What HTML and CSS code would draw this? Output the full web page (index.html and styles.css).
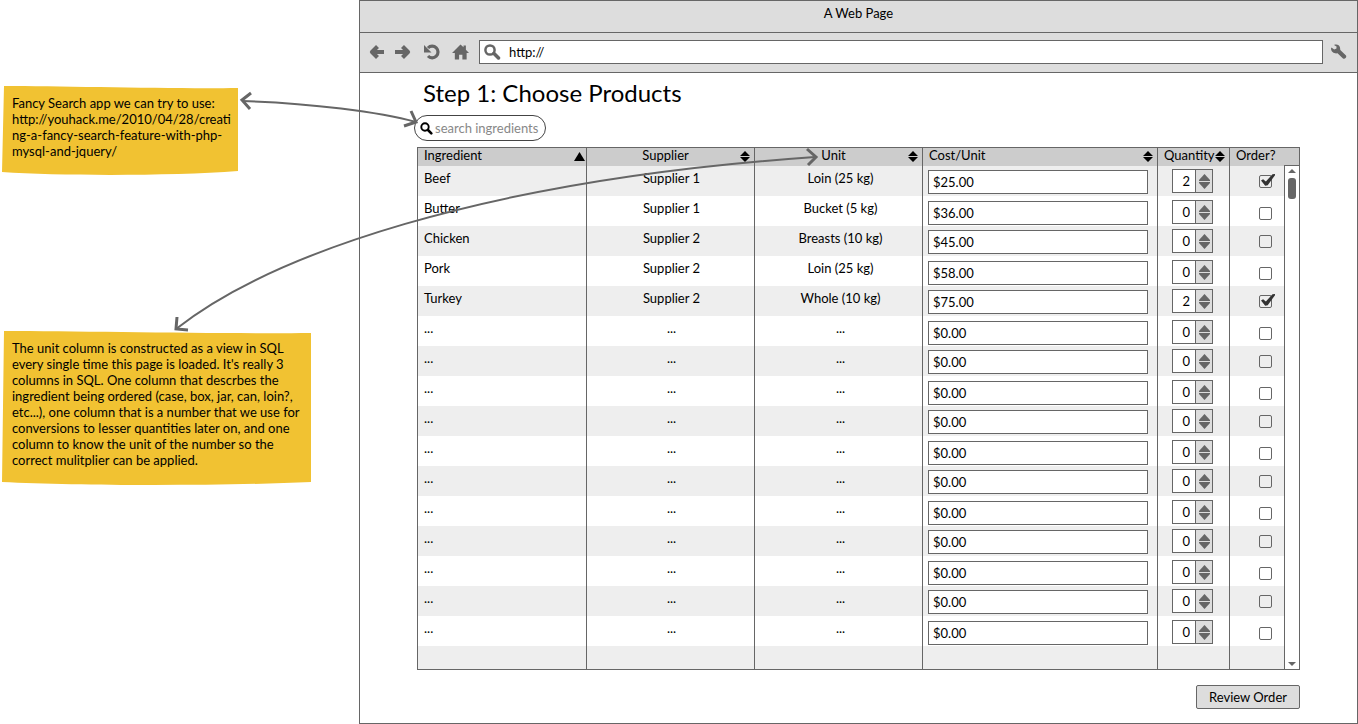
FILE: index.html
```html
<!DOCTYPE html>
<html lang="en">
<head>
<meta charset="utf-8">
<title>A Web Page</title>
<link rel="stylesheet" href="styles.css">
</head>
<body>
<svg class="defs" aria-hidden="true">
  <symbol id="sort" viewBox="0 0 10 11"><path d="M5 0 10 5H0ZM0 6H10L5 11Z"/></symbol>
  <symbol id="up" viewBox="0 0 11 7"><path d="M5.500 0 11 6V7H0V6Z"/></symbol>
  <symbol id="down" viewBox="0 0 11 7"><path d="M0 0H11V1L5.500 7 0 1Z"/></symbol>
</svg>
<div class="page">
  <aside class="notes">
    <div class="note note-search">
      <svg class="paper" viewBox="0 0 237 89" preserveAspectRatio="none" aria-hidden="true"><path d="M2 0 C60 0 170 3 236 2 L236 85 C170 90 60 90 0 86Z"/></svg>
      <p>Fancy Search app we can try to use:<br>http://youhack.me/2010/04/28/creati<br>ng-a-fancy-search-feature-with-php-<br>mysql-and-jquery/</p>
    </div>
    <div class="note note-unit">
      <svg class="paper" viewBox="0 0 310 154" preserveAspectRatio="none" aria-hidden="true"><path d="M2 0 C80 0 220 3 309 2 L309 151 C220 155 80 155 0 151Z"/></svg>
      <p>The unit column is constructed as a view in SQL<br>every single time this page is loaded. It's really 3<br>columns in SQL. One column that descrbes the<br>ingredient being ordered (case, box, jar, can, loin?,<br>etc...), one column that is a number that we use for<br>conversions to lesser quantities later on, and one<br>column to know the unit of the number so the<br>correct mulitplier can be applied.</p>
    </div>
  </aside>
  <main class="browser">
    <header class="titlebar">A Web Page</header>
    <nav class="toolbar">
      <button class="tool" aria-label="Back"><svg width="17" height="16" viewBox="0 0 17 16"><path d="M8.500 2.500 3 8l5.500 5.500M3 8h12" fill="none" stroke="#666" stroke-width="4.200" stroke-linejoin="round"/></svg></button>
      <button class="tool" aria-label="Forward"><svg width="17" height="16" viewBox="0 0 17 16"><path d="M8.500 2.500 14 8l-5.500 5.500M14 8H1" fill="none" stroke="#666" stroke-width="4.200" stroke-linejoin="round"/></svg></button>
      <button class="tool tool-reload" aria-label="Reload"><svg width="17" height="16" viewBox="0 0 17 16"><path d="M4 4A5.800 5.800 0 1 1 4 12" fill="none" stroke="#666" stroke-width="3.200"/><path d="M0 1v7.500h7.500Z" fill="#666"/></svg></button>
      <button class="tool" aria-label="Home"><svg width="17" height="16" viewBox="0 0 18 16"><path d="M9 0 12.200 3V1h2.500v4.500L18 9H15.500v7H11v-5H7.500v5H3V9H0Z" fill="#666"/></svg></button>
      <div class="address">
        <svg width="17" height="16" viewBox="0 0 17 16" aria-hidden="true"><circle cx="6" cy="6" r="4.600" fill="none" stroke="#666" stroke-width="2.500"/><path d="M10 9.500 14.500 14" stroke="#666" stroke-width="3.500" stroke-linecap="round"/></svg>
        <input type="text" aria-label="Address" value="http://">
      </div>
      <button class="tool" aria-label="Settings"><svg width="16" height="16" viewBox="0 0 16 16"><path d="M3 1C5.500-.2 8.500.8 9 3.500L9.300 6 15 11.500C16 13.500 14 15.500 12 14.500L6.500 9.300C3.500 10 0 8 0 4.500L.5 3.500 3.200 5.500 5.500 4.500V2.500Z" fill="#666"/></svg></button>
    </nav>
    <section class="content">
      <h1>Step 1: Choose Products</h1>
      <label class="search">
        <svg width="13" height="13" viewBox="0 0 13 13" aria-hidden="true"><circle cx="5" cy="5" r="3.700" fill="none" stroke="#000" stroke-width="1.900"/><path d="M8 8 11.300 11.300" stroke="#000" stroke-width="2.600" stroke-linecap="round"/></svg>
        <input type="search" aria-label="search ingredients" placeholder="search ingredients">
      </label>
      <div class="grid">
        <table>
          <colgroup><col class="c-third"><col class="c-third"><col class="c-third"><col><col class="c-qty"><col class="c-order"></colgroup>
          <thead>
            <tr>
              <th class="left">Ingredient<svg class="sort sort-asc" width="11" height="9" viewBox="0 0 11 9"><path d="M5.500 0 11 9H0Z"/></svg></th>
              <th>Supplier<svg class="sort" width="10" height="11"><use href="#sort"/></svg></th>
              <th>Unit<svg class="sort" width="10" height="11"><use href="#sort"/></svg></th>
              <th class="left">Cost/Unit<svg class="sort" width="10" height="11"><use href="#sort"/></svg></th>
              <th class="left">Quantity<svg class="sort" width="10" height="11"><use href="#sort"/></svg></th>
              <th class="left">Order?</th>
            </tr>
          </thead>
          <tbody>
            <tr><td>Beef</td><td>Supplier 1</td><td>Loin (25 kg)</td><td><input class="cost" aria-label="Cost" value="$25.00"></td><td><span class="stepper"><input type="number" aria-label="Quantity" value="2"><span class="arrows"><button aria-label="More"><svg><use href="#up"/></svg></button><button aria-label="Less"><svg><use href="#down"/></svg></button></span></span></td><td><input type="checkbox" aria-label="Order" checked></td></tr>
            <tr><td>Butter</td><td>Supplier 1</td><td>Bucket (5 kg)</td><td><input class="cost" aria-label="Cost" value="$36.00"></td><td><span class="stepper"><input type="number" aria-label="Quantity" value="0"><span class="arrows"><button aria-label="More"><svg><use href="#up"/></svg></button><button aria-label="Less"><svg><use href="#down"/></svg></button></span></span></td><td><input type="checkbox" aria-label="Order"></td></tr>
            <tr><td>Chicken</td><td>Supplier 2</td><td>Breasts (10 kg)</td><td><input class="cost" aria-label="Cost" value="$45.00"></td><td><span class="stepper"><input type="number" aria-label="Quantity" value="0"><span class="arrows"><button aria-label="More"><svg><use href="#up"/></svg></button><button aria-label="Less"><svg><use href="#down"/></svg></button></span></span></td><td><input type="checkbox" aria-label="Order"></td></tr>
            <tr><td>Pork</td><td>Supplier 2</td><td>Loin (25 kg)</td><td><input class="cost" aria-label="Cost" value="$58.00"></td><td><span class="stepper"><input type="number" aria-label="Quantity" value="0"><span class="arrows"><button aria-label="More"><svg><use href="#up"/></svg></button><button aria-label="Less"><svg><use href="#down"/></svg></button></span></span></td><td><input type="checkbox" aria-label="Order"></td></tr>
            <tr><td>Turkey</td><td>Supplier 2</td><td>Whole (10 kg)</td><td><input class="cost" aria-label="Cost" value="$75.00"></td><td><span class="stepper"><input type="number" aria-label="Quantity" value="2"><span class="arrows"><button aria-label="More"><svg><use href="#up"/></svg></button><button aria-label="Less"><svg><use href="#down"/></svg></button></span></span></td><td><input type="checkbox" aria-label="Order" checked></td></tr>
            <tr><td>...</td><td>...</td><td>...</td><td><input class="cost" aria-label="Cost" value="$0.00"></td><td><span class="stepper"><input type="number" aria-label="Quantity" value="0"><span class="arrows"><button aria-label="More"><svg><use href="#up"/></svg></button><button aria-label="Less"><svg><use href="#down"/></svg></button></span></span></td><td><input type="checkbox" aria-label="Order"></td></tr>
            <tr><td>...</td><td>...</td><td>...</td><td><input class="cost" aria-label="Cost" value="$0.00"></td><td><span class="stepper"><input type="number" aria-label="Quantity" value="0"><span class="arrows"><button aria-label="More"><svg><use href="#up"/></svg></button><button aria-label="Less"><svg><use href="#down"/></svg></button></span></span></td><td><input type="checkbox" aria-label="Order"></td></tr>
            <tr><td>...</td><td>...</td><td>...</td><td><input class="cost" aria-label="Cost" value="$0.00"></td><td><span class="stepper"><input type="number" aria-label="Quantity" value="0"><span class="arrows"><button aria-label="More"><svg><use href="#up"/></svg></button><button aria-label="Less"><svg><use href="#down"/></svg></button></span></span></td><td><input type="checkbox" aria-label="Order"></td></tr>
            <tr><td>...</td><td>...</td><td>...</td><td><input class="cost" aria-label="Cost" value="$0.00"></td><td><span class="stepper"><input type="number" aria-label="Quantity" value="0"><span class="arrows"><button aria-label="More"><svg><use href="#up"/></svg></button><button aria-label="Less"><svg><use href="#down"/></svg></button></span></span></td><td><input type="checkbox" aria-label="Order"></td></tr>
            <tr><td>...</td><td>...</td><td>...</td><td><input class="cost" aria-label="Cost" value="$0.00"></td><td><span class="stepper"><input type="number" aria-label="Quantity" value="0"><span class="arrows"><button aria-label="More"><svg><use href="#up"/></svg></button><button aria-label="Less"><svg><use href="#down"/></svg></button></span></span></td><td><input type="checkbox" aria-label="Order"></td></tr>
            <tr><td>...</td><td>...</td><td>...</td><td><input class="cost" aria-label="Cost" value="$0.00"></td><td><span class="stepper"><input type="number" aria-label="Quantity" value="0"><span class="arrows"><button aria-label="More"><svg><use href="#up"/></svg></button><button aria-label="Less"><svg><use href="#down"/></svg></button></span></span></td><td><input type="checkbox" aria-label="Order"></td></tr>
            <tr><td>...</td><td>...</td><td>...</td><td><input class="cost" aria-label="Cost" value="$0.00"></td><td><span class="stepper"><input type="number" aria-label="Quantity" value="0"><span class="arrows"><button aria-label="More"><svg><use href="#up"/></svg></button><button aria-label="Less"><svg><use href="#down"/></svg></button></span></span></td><td><input type="checkbox" aria-label="Order"></td></tr>
            <tr><td>...</td><td>...</td><td>...</td><td><input class="cost" aria-label="Cost" value="$0.00"></td><td><span class="stepper"><input type="number" aria-label="Quantity" value="0"><span class="arrows"><button aria-label="More"><svg><use href="#up"/></svg></button><button aria-label="Less"><svg><use href="#down"/></svg></button></span></span></td><td><input type="checkbox" aria-label="Order"></td></tr>
            <tr><td>...</td><td>...</td><td>...</td><td><input class="cost" aria-label="Cost" value="$0.00"></td><td><span class="stepper"><input type="number" aria-label="Quantity" value="0"><span class="arrows"><button aria-label="More"><svg><use href="#up"/></svg></button><button aria-label="Less"><svg><use href="#down"/></svg></button></span></span></td><td><input type="checkbox" aria-label="Order"></td></tr>
            <tr><td>...</td><td>...</td><td>...</td><td><input class="cost" aria-label="Cost" value="$0.00"></td><td><span class="stepper"><input type="number" aria-label="Quantity" value="0"><span class="arrows"><button aria-label="More"><svg><use href="#up"/></svg></button><button aria-label="Less"><svg><use href="#down"/></svg></button></span></span></td><td><input type="checkbox" aria-label="Order"></td></tr>
            <tr><td>...</td><td>...</td><td>...</td><td><input class="cost" aria-label="Cost" value="$0.00"></td><td><span class="stepper"><input type="number" aria-label="Quantity" value="0"><span class="arrows"><button aria-label="More"><svg><use href="#up"/></svg></button><button aria-label="Less"><svg><use href="#down"/></svg></button></span></span></td><td><input type="checkbox" aria-label="Order"></td></tr>
            <tr class="rest"><td></td><td></td><td></td><td></td><td></td><td></td></tr>
          </tbody>
        </table>
        <div class="scrollbar">
          <svg width="8" height="4" viewBox="0 0 8 4"><path d="M4 0 8 4H0Z"/></svg>
          <span class="thumb"></span>
          <svg class="end" width="8" height="4" viewBox="0 0 8 4"><path d="M0 0H8L4 4Z"/></svg>
        </div>
      </div>
      <button class="review">Review Order</button>
    </section>
  </main>
  <svg class="links" width="830" height="340" viewBox="0 0 830 340" aria-hidden="true">
    <path d="M242 101C310 103 380 112 416 122M176 329C270 255 480 180 815 157"/>
    <path class="head" d="M251 93 242 100 250 109M411 111 416 122 404 126M177 317 176 329 188 330M807 149 816 157 808 165"/>
  </svg>
</div>
</body>
</html>
```
FILE: styles.css
```css
* { box-sizing: border-box; }
body {
  margin: 0;
  background: #fff;
  color: #000;
  font: 13px/16px Lato, "Open Sans", sans-serif;
}
input, button { font: inherit; color: inherit; margin: 0; padding: 0; }
button { border: 0; background: none; }
.defs { display: none; }

.page { position: relative; display: flex; min-height: 100vh; }
.links {
  position: absolute; left: 0; top: 0;
  fill: none; stroke: #666; stroke-width: 2;
  pointer-events: none;
}
.links .head { stroke-width: 3; }

.notes {
  flex: 0 0 359px;
  display: flex; flex-direction: column; align-items: flex-start;
  gap: 156px;
  padding: 86px 0 0 2px;
}
.note { position: relative; padding: 9px 10px 16px; white-space: nowrap; }
.note-search { width: 237px; }
.note-unit { width: 310px; padding-bottom: 17px; }
.note p { position: relative; margin: 0; }
.paper { position: absolute; left: 0; top: 0; width: 100%; height: 100%; fill: #f1c232; }

.browser { flex: 1; border: 1px solid #666; display: flex; flex-direction: column; min-width: 0; }
.titlebar { height: 32px; padding-top: 4px; text-align: center; background: #ddd; border-bottom: 1px solid #666; }
.toolbar {
  display: flex; align-items: center; gap: 8px;
  height: 40px; padding: 0 10px 1px 9px;
  background: #ddd; border-bottom: 1px solid #666;
}
.tool { display: flex; }
.tool-reload { margin: 0 3px 0 5px; }
.address {
  flex: 1; display: flex; align-items: center; gap: 8px;
  height: 24px; margin-left: 2px; padding-left: 4px;
  background: #fff; border: 1px solid #666;
}
.address input { flex: 1; border: 0; background: none; }

.content { display: flex; flex-direction: column; align-items: flex-start; padding: 6px 57px 14px; }
h1 { margin: 0 0 8px 6px; font-size: 24px; font-weight: 400; line-height: 28px; }
.search {
  display: flex; align-items: center; gap: 2px;
  width: 132px; height: 26px; margin: 0 0 6px -3px; padding-left: 5px;
  border: 1px solid #444; border-radius: 13px;
}
.search input { width: 108px; border: 0; background: none; appearance: none; outline: 0; }
.search input::-webkit-search-cancel-button { display: none; }
.search input::placeholder { color: #888; }

.grid { position: relative; width: 100%; border: 1px solid #666; }
table { width: 100%; table-layout: fixed; border-collapse: separate; border-spacing: 0; }
.c-third { width: 168px; }
.grid col:first-child { width: 169px; }
.c-qty { width: 72px; }
.c-order { width: 69px; }
th {
  position: relative; height: 18px; padding: 0 10px 4px 0;
  font-weight: 400; line-height: 14px; background: #ccc;
}
th.left { text-align: left; padding-left: 6px; padding-right: 0; }
.sort { position: absolute; right: 4px; top: 3px; }
.sort-asc { right: 1px; top: 4px; }
th, td { border-right: 1px solid #666; }
th:last-child, td:last-child { border-right: 0; }
td { height: 30px; padding: 4px 4px 0 6px; vertical-align: top; text-align: center; }
td:first-child { text-align: left; }
td:nth-child(3) { padding: 4px 4px 0 8px; }
td:nth-child(4) { padding: 4px 9px 0 5px; }
td:nth-child(5) { padding: 3px 0 0 14px; text-align: left; }
td:nth-child(6) { padding: 9px 0 0 29px; text-align: left; }
tr:nth-child(odd) td { background: #eee; }
tr:nth-child(even) td:nth-child(4) { padding-top: 5px; }
tr:nth-child(even) td:nth-child(5) { padding-top: 4px; }
tr:nth-child(even) td:nth-child(6) { padding-top: 11px; }
.rest td { height: 23px; }

.cost { display: block; width: 100%; height: 24px; padding-left: 4px; background: #fff; border: 1px solid #666; }
.stepper { display: flex; width: 41px; height: 24px; border: 1px solid #666; background: #ddd; }
.stepper input {
  width: 23px; border: 0; border-right: 1px solid #666;
  background: #fff; text-align: right; padding-right: 5px; appearance: textfield;
}
.stepper input::-webkit-inner-spin-button { appearance: none; display: none; }
.arrows { flex: 1; display: flex; flex-direction: column; align-items: center; justify-content: center; gap: 1px; }
.arrows button { display: flex; }
.arrows svg { width: 11px; height: 7px; fill: #666; }

input[type="checkbox"] {
  appearance: none; display: block; position: relative;
  width: 13px; height: 13px; border: 1px solid #666; border-radius: 2px; background: transparent;
}
input[type="checkbox"]:checked::before {
  content: ""; position: absolute; left: 1px; top: -2px;
  width: 14px; height: 12px; background: #333;
  clip-path: polygon(0 55%, 15% 44%, 35% 62%, 82% 2%, 100% 0, 100% 10%, 48% 94%, 30% 98%);
}

.scrollbar {
  position: absolute; right: 0; top: 17px; bottom: 0; width: 15px;
  display: flex; flex-direction: column; align-items: center;
  padding: 3px 0; border: 1px solid #666; border-width: 1px 0 0 1px; background: #fff; fill: #666;
}
.thumb { width: 8px; height: 21px; margin-top: 5px; border-radius: 3px; background: #666; }
.scrollbar .end { margin-top: auto; }

.review {
  align-self: flex-end; width: 104px; height: 24px; margin-top: 15px;
  background: #ddd; border: 1px solid #666; border-radius: 2px;
}
```
